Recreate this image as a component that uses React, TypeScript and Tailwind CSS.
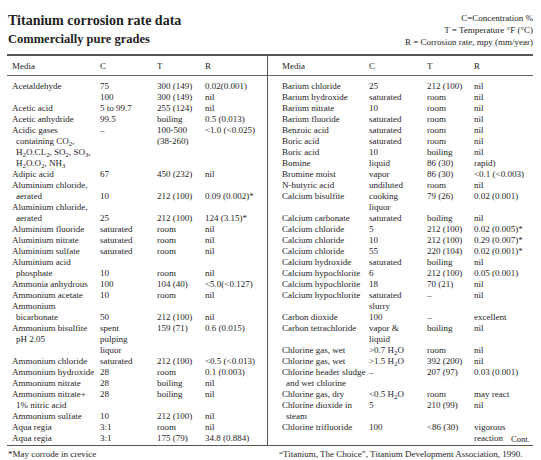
import type { ReactNode } from "react";

// [media, concentration, temperature, rate, indented continuation line]
type Row = [ReactNode, ReactNode?, ReactNode?, ReactNode?, boolean?];

const s = (n: string) => <sub>{n}</sub>;

const LEFT: Row[] = [
  ["Acetaldehyde", "75", "300 (149)", "0.02(0.001)"],
  ["", "100", "300 (149)", "nil"],
  ["Acetic acid", "5 to 99.7", "255 (124)", "nil"],
  ["Acetic anhydride", "99.5", "boiling", "0.5 (0.013)"],
  ["Acidic gases", "–", "100-500", "<1.0 (<0.025)"],
  [<>containing CO{s("2")},</>, "", "(38-260)", "", true],
  [<>H{s("2")}O.CL{s("2")}, SO{s("2")}, SO{s("3")},</>, "", "", "", true],
  [<>H{s("2")}O.O{s("2")}, NH{s("3")}</>, "", "", "", true],
  ["Adipic acid", "67", "450 (232)", "nil"],
  ["Aluminium chloride,"],
  ["aerated", "10", "212 (100)", "0.09 (0.002)*", true],
  ["Aluminium chloride,"],
  ["aerated", "25", "212 (100)", "124 (3.15)*", true],
  ["Aluminium fluoride", "saturated", "room", "nil"],
  ["Aluminium nitrate", "saturated", "room", "nil"],
  ["Aluminium sulfate", "saturated", "room", "nil"],
  ["Aluminium acid"],
  ["phosphate", "10", "room", "nil", true],
  ["Ammonia anhydrous", "100", "104 (40)", "<5.0(<0.127)"],
  ["Ammonium acetate", "10", "room", "nil"],
  ["Ammonium"],
  ["bicarbonate", "50", "212 (100)", "nil", true],
  ["Ammonium bisulfite", "spent", "159 (71)", "0.6 (0.015)"],
  ["pH 2.05", "pulping", "", "", true],
  ["", "liquor"],
  ["Ammonium chloride", "saturated", "212 (100)", "<0.5 (<0.013)"],
  ["Ammonium hydroxide", "28", "room", "0.1 (0.003)"],
  ["Ammonium nitrate", "28", "boiling", "nil"],
  ["Ammonium nitrate+", "28", "boiling", "nil"],
  ["1% nitric acid", "", "", "", true],
  ["Ammonium sulfate", "10", "212 (100)", "nil"],
  ["Aqua regia", "3:1", "room", "nil"],
  ["Aqua regia", "3:1", "175 (79)", "34.8 (0.884)"],
];

const RIGHT: Row[] = [
  ["Barium chloride", "25", "212 (100)", "nil"],
  ["Barium hydroxide", "saturated", "room", "nil"],
  ["Barium nitrate", "10", "room", "nil"],
  ["Barium fluoride", "saturated", "room", "nil"],
  ["Benzoic acid", "saturated", "room", "nil"],
  ["Boric acid", "saturated", "room", "nil"],
  ["Boric acid", "10", "boiling", "nil"],
  ["Bomine", "liquid", "86 (30)", "rapid)"],
  ["Bromine moist", "vapor", "86 (30)", "<0.1 (<0.003)"],
  ["N-butyric acid", "undiluted", "room", "nil"],
  ["Calcium bisulfite", "cooking", "79 (26)", "0.02 (0.001)"],
  ["", "liquor"],
  ["Calcium carbonate", "saturated", "boiling", "nil"],
  ["Calcium chloride", "5", "212 (100)", "0.02 (0.005)*"],
  ["Calcium chloride", "10", "212 (100)", "0.29 (0.007)*"],
  ["Calcium chloride", "55", "220 (104)", "0.02 (0.001)*"],
  ["Calcium hydroxide", "saturated", "boiling", "nil"],
  ["Calcium hypochlorite", "6", "212 (100)", "0.05 (0.001)"],
  ["Calcium hypochlorite", "18", "70 (21)", "nil"],
  ["Calcium hypochlorite", "saturated", "–", "nil"],
  ["", "slurry"],
  ["Carbon dioxide", "100", "–", "excellent"],
  ["Carbon tetrachloride", "vapor &", "boiling", "nil"],
  ["", "liquid"],
  ["Chlorine gas, wet", <>&gt;0.7 H{s("2")}O</>, "room", "nil"],
  ["Chlorine gas, wet", <>&gt;1.5 H{s("2")}O</>, "392 (200)", "nil"],
  ["Chlorine header sludge", "–", "207 (97)", "0.03 (0.001)"],
  ["and wet chlorine", "", "", "", true],
  ["Chlorine gas, dry", <>&lt;0.5 H{s("2")}O</>, "room", "may react"],
  ["Chlorine dioxide in", "5", "210 (99)", "nil"],
  ["steam", "", "", "", true],
  ["Chlorine trifluoride", "100", "<86 (30)", "vigorous"],
  [
    "",
    "",
    "",
    <span className="flex items-end">
      reaction
      <span className="ml-[8px] text-[8.5px] translate-y-[1px]">Cont.</span>
    </span>,
  ],
];

function Half({ rows, cols, pad, divider }: { rows: Row[]; cols: string; pad: string; divider?: boolean }) {
  return (
    <div className={divider ? "border-r border-[#555]" : ""}>
      <div className={`grid ${cols} ${pad} h-[20px] leading-[20px] border-b border-[#666]`}>
        <span>Media</span>
        <span>C</span>
        <span>T</span>
        <span>R</span>
      </div>
      <div className={`${pad} pt-[5px] pb-[1px]`}>
        {rows.map(([media, c, t, r, indent], i) => (
          <div key={i} className={`grid ${cols} h-[11px] leading-[11px] whitespace-nowrap`}>
            <span className={indent ? "pl-[4px]" : ""}>{media}</span>
            <span>{c}</span>
            <span>{t}</span>
            <span>{r}</span>
          </div>
        ))}
      </div>
    </div>
  );
}

export default function App() {
  return (
    <div className="w-[541px] h-[460px] overflow-hidden bg-white text-[#1e1e1e] font-['Liberation_Serif',serif] text-[9px]">
      <header className="flex justify-between items-start h-[54px] pl-2 pr-[8px] pt-[11px]">
        <div className="font-bold">
          <h1 className="text-[14px] leading-[19px]">Titanium corrosion rate data</h1>
          <h2 className="text-[12.5px] leading-[19px]">Commercially pure grades</h2>
        </div>
        <div className="text-right leading-[12px] pt-[1px]">
          <div>C=Concentration %</div>
          <div>T = Temperature °F (°C)</div>
          <div>R = Corrosion rate, mpy (mm/year)</div>
        </div>
      </header>

      <div className="mx-[7px] w-[526px] grid grid-cols-[261px_1fr] border-t-2 border-b-[1.5px] border-[#555]">
        <Half rows={LEFT} cols="grid-cols-[88px_57px_48px_1fr]" pad="pl-[5px]" divider />
        <Half rows={RIGHT} cols="grid-cols-[87px_58px_47px_1fr]" pad="pl-[14px]" />
      </div>

      <div className="mx-[7px] w-[526px] grid grid-cols-[261px_1fr] pt-[3px] leading-[10px]">
        <span className="pl-[1px]">*May corrode in crevice</span>
        <span className="pl-[11px]">“Titanium, The Choice”, Titanium Development Association, 1990.</span>
      </div>
    </div>
  );
}
